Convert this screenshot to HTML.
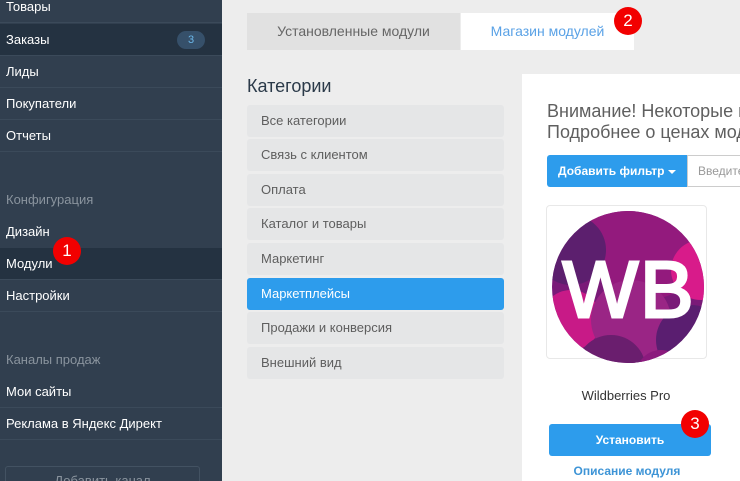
<!DOCTYPE html>
<html><head><meta charset="utf-8"><style>
*{margin:0;padding:0;box-sizing:border-box}
html,body{width:740px;height:481px;overflow:hidden}
body{background:#ededed;font-family:"Liberation Sans","DejaVu Sans",sans-serif;position:relative}
.sb{position:absolute;left:0;top:0;width:222px;height:481px;background:#313f4f;overflow:hidden}
.it{position:absolute;left:0;width:222px;height:32px;border-bottom:1px solid #3b4a5a;color:#fff;font-size:13px;line-height:31px;padding-left:6px}
.dk{background:#243241}
.lb{position:absolute;left:6px;color:#8a949e;font-size:13px}
.a{position:absolute}
.cat{position:absolute;left:247px;width:257px;height:32px;background:#e5e6e7;border-radius:3px;color:#5e5e5e;font-size:13px;line-height:31px;padding-left:14px}
.red{position:absolute;width:28px;height:28px;border-radius:50%;background:#f20000;color:#fff;font-size:17px;text-align:center;line-height:28px}
</style></head><body>
<div class="sb">
<div class="it" style="top:-9px">Товары</div>
<div class="it dk" style="top:24px">Заказы<span class="a" style="left:177px;top:7px;width:28px;height:18px;border-radius:9px;background:#36506a;color:#6bb6e8;font-size:11px;line-height:18px;text-align:center">3</span></div>
<div class="it" style="top:56px">Лиды</div>
<div class="it" style="top:88px">Покупатели</div>
<div class="it" style="top:120px">Отчеты</div>
<div class="lb" style="top:192px">Конфигурация</div>
<div class="it" style="top:216px;border-bottom:none">Дизайн</div>
<div class="it dk" style="top:248px">Модули</div>
<div class="it" style="top:280px">Настройки</div>
<div class="lb" style="top:352px">Каналы продаж</div>
<div class="it" style="top:376px">Мои сайты</div>
<div class="it" style="top:408px">Реклама в Яндекс Директ</div>
<div class="a" style="left:5px;top:466px;width:195px;height:30px;border:1px solid #435262;border-radius:3px;color:#8a949e;font-size:13px;text-align:center;line-height:28px">Добавить канал</div>
</div>
<div class="red" style="left:53px;top:237px">1</div>
<div class="a" style="left:247px;top:13px;width:213px;height:37px;background:#e1e1e1;color:#666;font-size:14px;text-align:center;line-height:37px">Установленные модули</div>
<div class="a" style="left:461px;top:13px;width:173px;height:37px;background:#fff;color:#5aa2e6;font-size:14px;text-align:center;line-height:37px">Магазин модулей</div>
<div class="red" style="left:614px;top:7px">2</div>
<div class="a" style="left:247px;top:76px;font-size:18px;color:#2b3a49">Категории</div>
<div class="cat" style="top:105px">Все категории</div>
<div class="cat" style="top:139px">Связь с клиентом</div>
<div class="cat" style="top:174px">Оплата</div>
<div class="cat" style="top:208px">Каталог и товары</div>
<div class="cat" style="top:243px">Маркетинг</div>
<div class="cat" style="top:278px;background:#2d9cec;color:#fff">Маркетплейсы</div>
<div class="cat" style="top:312px">Продажи и конверсия</div>
<div class="cat" style="top:347px">Внешний вид</div>
<div class="a" style="left:522px;top:74px;width:218px;height:407px;background:#fff;overflow:hidden">
<div class="a" style="left:25px;top:27px;font-size:18px;line-height:21px;color:#5f5f5f;white-space:nowrap">Внимание! Некоторые модули платные<br>Подробнее о ценах модулей</div>
<div class="a" style="left:25px;top:81px;width:140px;height:32px;background:#2d9cec;border-radius:3px 0 0 3px;color:#fff;font-size:12px;font-weight:bold;line-height:32px;padding-left:11px">Добавить фильтр <span style="display:inline-block;border:4px solid transparent;border-top:4px solid #fff;border-bottom:0;vertical-align:middle"></span></div>
<div class="a" style="left:165px;top:81px;width:80px;height:32px;border:1px solid #ccc;color:#999;font-size:12px;line-height:30px;padding-left:10px;white-space:nowrap">Введите</div>
<div class="a" style="left:24px;top:131px;width:161px;height:154px;border:1px solid #e8e8e8;border-radius:4px"></div>
<svg class="a" style="left:29px;top:136px" width="154" height="154" viewBox="0 0 154 154">
<defs><clipPath id="c"><circle cx="77" cy="77" r="76"/></clipPath></defs>
<g clip-path="url(#c)">
<rect width="154" height="154" fill="#7a1a78"/>
<circle cx="95" cy="30" r="60" fill="#931a7d"/>
<circle cx="20" cy="40" r="35" fill="#5c1f6e"/>
<circle cx="150" cy="60" r="30" fill="#d81b8a"/>
<circle cx="20" cy="110" r="30" fill="#c81a87"/>
<circle cx="80" cy="110" r="40" fill="#9a2585"/>
<circle cx="60" cy="160" r="35" fill="#6a1e6e"/>
<circle cx="140" cy="130" r="35" fill="#5a1e70"/>
<circle cx="110" cy="165" r="25" fill="#8b1a7d"/>
</g>
<text x="78" y="107" text-anchor="middle" font-family="Liberation Sans,sans-serif" font-size="80" fill="#fff" stroke="#fff" stroke-width="3" letter-spacing="2">WB</text>
</svg>
<div class="a" style="left:0;top:314px;width:208px;text-align:center;font-size:13px;color:#333">Wildberries Pro</div>
<div class="a" style="left:27px;top:350px;width:162px;height:32px;background:#2d9cec;border-radius:3px;color:#fff;font-size:12px;font-weight:bold;text-align:center;line-height:32px">Установить</div>
<div class="a" style="left:0;top:390px;width:218px;text-align:center;font-size:12px;font-weight:bold;color:#3d94d6;padding-right:8px">Описание модуля</div>
</div>
<div class="red" style="left:681px;top:410px">3</div>
</body></html>
